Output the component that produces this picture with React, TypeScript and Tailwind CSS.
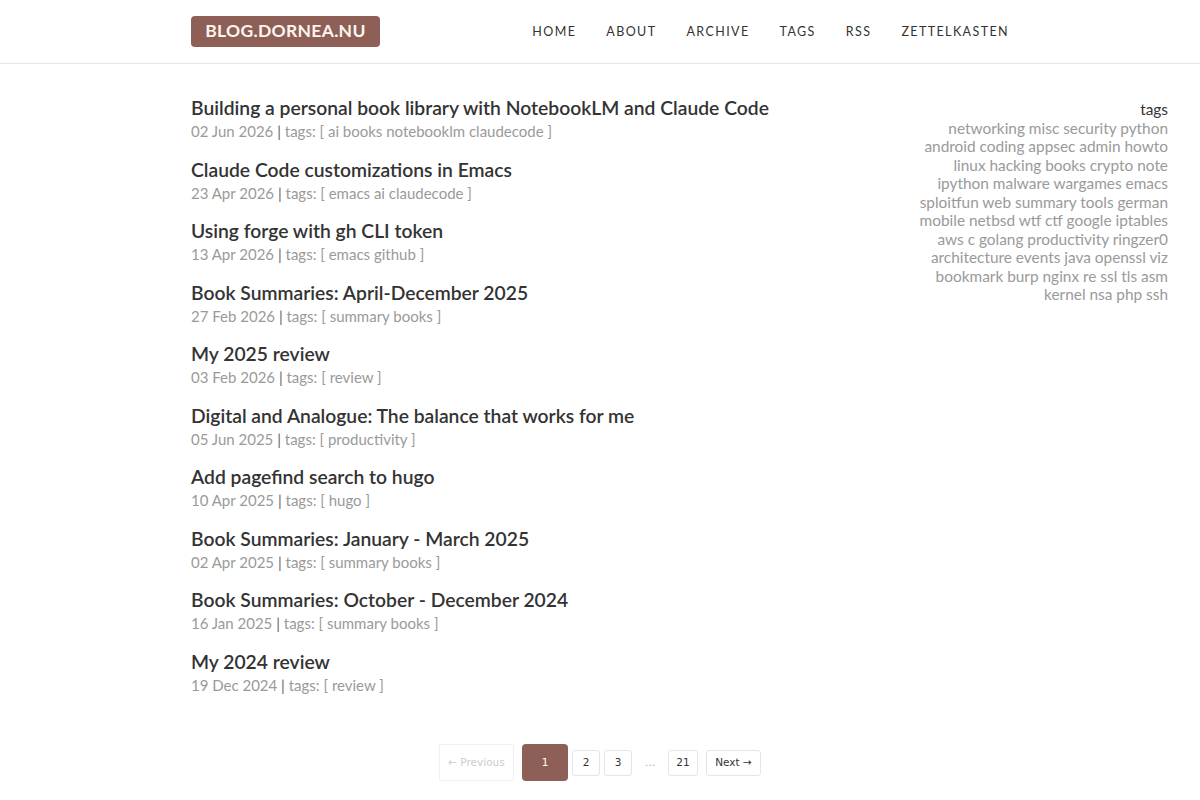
import React from 'react';

const posts = [
  { title: 'Building a personal book library with NotebookLM and Claude Code', date: '02 Jun 2026', tags: 'ai books notebooklm claudecode' },
  { title: 'Claude Code customizations in Emacs', date: '23 Apr 2026', tags: 'emacs ai claudecode' },
  { title: 'Using forge with gh CLI token', date: '13 Apr 2026', tags: 'emacs github' },
  { title: 'Book Summaries: April-December 2025', date: '27 Feb 2026', tags: 'summary books' },
  { title: 'My 2025 review', date: '03 Feb 2026', tags: 'review' },
  { title: 'Digital and Analogue: The balance that works for me', date: '05 Jun 2025', tags: 'productivity' },
  { title: 'Add pagefind search to hugo', date: '10 Apr 2025', tags: 'hugo' },
  { title: 'Book Summaries: January - March 2025', date: '02 Apr 2025', tags: 'summary books' },
  { title: 'Book Summaries: October - December 2024', date: '16 Jan 2025', tags: 'summary books' },
  { title: 'My 2024 review', date: '19 Dec 2024', tags: 'review' },
];

const tagLines = [
  'networking misc security python',
  'android coding appsec admin howto',
  'linux hacking books crypto note',
  'ipython malware wargames emacs',
  'sploitfun web summary tools german',
  'mobile netbsd wtf ctf google iptables',
  'aws c golang productivity ringzer0',
  'architecture events java openssl viz',
  'bookmark burp nginx re ssl tls asm',
  'kernel nsa php ssh',
];

const navItems = ['Home', 'About', 'Archive', 'Tags', 'RSS', 'Zettelkasten'];

const App: React.FC = () => {
  return (
    <div className="min-h-screen bg-white font-['Lato','Liberation_Sans',sans-serif] text-[#333]">
      {/* header */}
      <header className="h-[64px] border-b border-[#e5e5e5]">
        <div className="flex items-center h-full pl-[191px] w-[1009px]">
          <a className="h-[31px] mt-[-1px] w-[189px] flex items-center justify-center bg-[#8d5f56] rounded-[4px] text-[#fdf5ee] text-[17.5px] font-bold tracking-[0.3px]">
            BLOG.DORNEA.NU
          </a>
          <nav className="ml-auto flex gap-[30px] mt-[1px]">
            {navItems.map((item) => (
              <a key={item} className="uppercase text-[12.5px] tracking-[1.4px] text-[#333]">
                {item}
              </a>
            ))}
          </nav>
        </div>
      </header>

      {/* main */}
      <div className="flex pl-[191px] pr-[32px] pt-[31px]">
        <div className="flex-1">
          {posts.map((post) => (
            <div key={post.title} className="h-[61.5px]">
              <h2 className="text-[19.3px] leading-[26px] font-semibold text-[#333]">{post.title}</h2>
              <div className="text-[15px] leading-[22px] text-[#9a9a9a] mt-[-1px]">
                {post.date} <span className="text-[#666]">|</span> tags: [ {post.tags} ]
              </div>
            </div>
          ))}
        </div>
        <aside className="w-[260px] text-right pt-[5px]">
          <div className="text-[15.4px] leading-[18.5px] text-[#333]">tags</div>
          {tagLines.map((line) => (
            <div key={line} className="text-[15.4px] leading-[18.5px] text-[#9a9a9a]">
              {line}
            </div>
          ))}
        </aside>
      </div>

      {/* pagination */}
      <div className="flex justify-center items-center gap-[4px] mt-[34px] pb-[20px] font-['DejaVu_Sans',sans-serif] text-[10.5px] text-[#333]">
        <span className="h-[37px] w-[75px] flex items-center justify-center border border-[#f0f0f0] rounded-[2px] text-[#ccc] mr-[4px]">
          ← Previous
        </span>
        <span className="h-[37px] w-[46px] flex items-center justify-center bg-[#8d5f56] rounded-[4px] text-white">1</span>
        <span className="h-[26px] w-[28px] flex items-center justify-center border border-[#e5e5e5] rounded-[3px]">2</span>
        <span className="h-[26px] w-[28px] flex items-center justify-center border border-[#e5e5e5] rounded-[3px]">3</span>
        <span className="h-[26px] w-[28px] flex items-center justify-center text-[#aaa]">…</span>
        <span className="h-[26px] w-[30px] flex items-center justify-center border border-[#e5e5e5] rounded-[3px]">21</span>
        <span className="h-[26px] w-[55px] flex items-center justify-center border border-[#e5e5e5] rounded-[3px] ml-[4px]">Next →</span>
      </div>
    </div>
  );
};

export default App;
